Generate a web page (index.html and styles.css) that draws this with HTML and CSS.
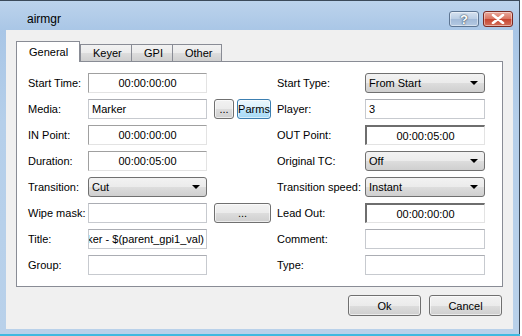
FILE: index.html
```html
<!DOCTYPE html>
<html>
<head>
<meta charset="utf-8">
<link rel="stylesheet" href="styles.css">
</head>
<body>
<div class="window">
  <div class="titlebar">
    <span class="title">airmgr</span>
    <div class="caption-btns">
      <div class="cap-btn help">?</div>
      <div class="cap-btn close">
        <svg width="14" height="10" viewBox="0 0 14 10"><path d="M2 1 L12 9 M12 1 L2 9" stroke="#fff" stroke-width="2.6" stroke-linecap="round"/></svg>
      </div>
    </div>
  </div>
  <div class="client">
    <div class="tabs">
      <div class="tab active">General</div>
      <div class="tab">Keyer</div>
      <div class="tab">GPI</div>
      <div class="tab">Other</div>
    </div>
    <div class="panel">
      <div class="form">
        <label>Start Time:</label>
        <div class="field time">00:00:00:00</div>
        <div class="gap"></div>
        <label>Start Type:</label>
        <div class="select"><span>From Start</span><i class="arrow"></i></div>

        <label>Media:</label>
        <div class="field">Marker</div>
        <div class="btncell"><div class="btn small">...</div><div class="btn parms">Parms</div></div>
        <label>Player:</label>
        <div class="field">3</div>

        <label>IN Point:</label>
        <div class="field time">00:00:00:00</div>
        <div class="gap"></div>
        <label>OUT Point:</label>
        <div class="field time deep">00:00:05:00</div>

        <label>Duration:</label>
        <div class="field time">00:00:05:00</div>
        <div class="gap"></div>
        <label>Original TC:</label>
        <div class="select"><span>Off</span><i class="arrow"></i></div>

        <label>Transition:</label>
        <div class="select"><span>Cut</span><i class="arrow"></i></div>
        <div class="gap"></div>
        <label>Transition speed:</label>
        <div class="select"><span>Instant</span><i class="arrow"></i></div>

        <label>Wipe mask:</label>
        <div class="field"></div>
        <div class="btncell"><div class="btn wide">...</div></div>
        <label>Lead Out:</label>
        <div class="field time deep">00:00:00:00</div>

        <label>Title:</label>
        <div class="field scrolled"><span>Marker - $(parent_gpi1_val)</span></div>
        <div class="gap"></div>
        <label>Comment:</label>
        <div class="field"></div>

        <label>Group:</label>
        <div class="field"></div>
        <div class="gap"></div>
        <label>Type:</label>
        <div class="field"></div>
      </div>
    </div>
    <div class="actions">
      <div class="btn action">Ok</div>
      <div class="btn action">Cancel</div>
    </div>
  </div>
  <div class="bottom-line"></div>
</div>
</body>
</html>
```
FILE: styles.css
```css
html, body {
  margin: 0;
  padding: 0;
  background: #ffffff;
}
body {
  font-family: "Liberation Sans", Arial, sans-serif;
  font-size: 11px;
  color: #000;
}
.window {
  width: 519px;
  height: 335px;
  border-top: 1px solid #3c4a5a;
  border-right: 1px solid #3c4a5a;
  background: linear-gradient(to bottom, #bcd3ec 0px, #a9c6e6 30px, #b5cfea 120px, #b9d1ea 336px);
  display: flex;
  flex-direction: column;
}
.titlebar {
  height: 29px;
  display: flex;
  align-items: flex-start;
  justify-content: space-between;
}
.title {
  margin-left: 27px;
  margin-top: 11px;
  font-size: 12px;
  color: #000;
}
.caption-btns {
  display: flex;
  gap: 4px;
  margin-top: 10px;
  margin-right: 6px;
}
.cap-btn {
  width: 28px;
  height: 14px;
  border: 1px solid #5d7592;
  border-radius: 3px;
  display: flex;
  align-items: center;
  justify-content: center;
  box-shadow: inset 0 0 0 1px rgba(255,255,255,0.45);
}
.help {
  background: linear-gradient(to bottom, #d6e2f0 0%, #b9cde4 50%, #a2bad8 51%, #b4c9e2 100%);
  color: #fff;
  font-weight: bold;
  font-size: 13px;
  text-shadow: 0 0 2px #345, 0 0 1px #345;
}
.close {
  border-color: #7a2a22;
  background: linear-gradient(to bottom, #e9a99c 0%, #d9735f 50%, #c7442f 51%, #d2705c 100%);
}
.client {
  margin-left: 6px;
  width: 507px;
  height: 299px;
  background: #f0f0f0;
  display: flex;
  flex-direction: column;
}
.tabs {
  display: flex;
  margin-left: 10px;
  margin-top: 12px;
  height: 19px;
  align-items: flex-end;
  position: relative;
  z-index: 1;
}
.tab {
  height: 16px;
  border: 1px solid #898c95;
  border-bottom: none;
  margin-right: -1px;
  background: linear-gradient(to bottom, #f2f2f2 0%, #ebebeb 50%, #dddddd 51%, #cfcfcf 100%);
  display: flex;
  align-items: center;
  padding: 0 12px;
  color: #000;
}
.tab:nth-child(2) { width: 26px; }
.tab:nth-child(3) { width: 16px; }
.tab:nth-child(4) { width: 24px; }
.tab.active {
  height: 20px;
  width: 38px;
  background: #ffffff;
  margin-bottom: -1px;
  margin-right: 0;
  z-index: 2;
  position: relative;
}
.panel {
  margin-left: 10px;
  width: 485px;
  height: 224px;
  border: 1px solid #898c95;
  background: #ffffff;
  box-sizing: content-box;
}
.form {
  display: grid;
  grid-template-columns: 60px 119px 70px 88px 120px;
  grid-auto-rows: 20px;
  row-gap: 6px;
  padding: 11px 0 0 11px;
  align-items: center;
}
.form label {
  white-space: nowrap;
}
.field {
  height: 18px;
  border: 1px solid #c7cacf;
  border-top-color: #abadb3;
  background: #fff;
  display: flex;
  align-items: center;
  padding: 0 3px;
  overflow: hidden;
  white-space: nowrap;
}
.field.time {
  justify-content: center;
  border-color: #e3e3e3;
  border-top-color: #a0a0a0;
  border-left-color: #a0a0a0;
}
.field.deep {
  border-top: 2px solid #6e6e6e;
  border-left: 2px solid #6e6e6e;
  height: 17px;
}
.field.scrolled {
  justify-content: flex-end;
  padding-right: 2px;
}
.field.scrolled span {
  flex: none;
}
.gap { height: 20px; }
.select {
  height: 18px;
  border: 1px solid #707070;
  border-radius: 3px;
  background: linear-gradient(to bottom, #f2f2f2 0%, #ebebeb 50%, #dddddd 51%, #cfcfcf 100%);
  display: flex;
  align-items: center;
  justify-content: space-between;
  padding: 0 6px 0 3px;
}
.arrow {
  width: 0;
  height: 0;
  border-left: 4px solid transparent;
  border-right: 4px solid transparent;
  border-top: 4px solid #000;
}
.btncell {
  display: flex;
  gap: 3px;
  padding-left: 7px;
  height: 20px;
}
.btn {
  box-sizing: border-box;
  height: 20px;
  border: 1px solid #707070;
  border-radius: 3px;
  background: linear-gradient(to bottom, #f2f2f2 0%, #ebebeb 50%, #dddddd 51%, #cfcfcf 100%);
  display: flex;
  align-items: center;
  justify-content: center;
  box-shadow: inset 0 0 0 1px rgba(255,255,255,0.6);
}
.btn.small { width: 20px; }
.btn.parms {
  width: 34px;
  border-color: #3c7fb1;
  background: linear-gradient(to bottom, #eaf6fd 0%, #d9f0fc 50%, #bee6fd 51%, #a7d9f5 100%);
}
.btn.wide { width: 57px; }
.actions {
  display: flex;
  justify-content: flex-end;
  gap: 8px;
  margin-top: 8px;
  margin-right: 11px;
}
.btn.action {
  width: 73px;
  height: 21px;
}
.bottom-line {
  margin-top: 5px;
  height: 2px;
  background: #3fb9e0;
  margin-right: -1px;
}
```
